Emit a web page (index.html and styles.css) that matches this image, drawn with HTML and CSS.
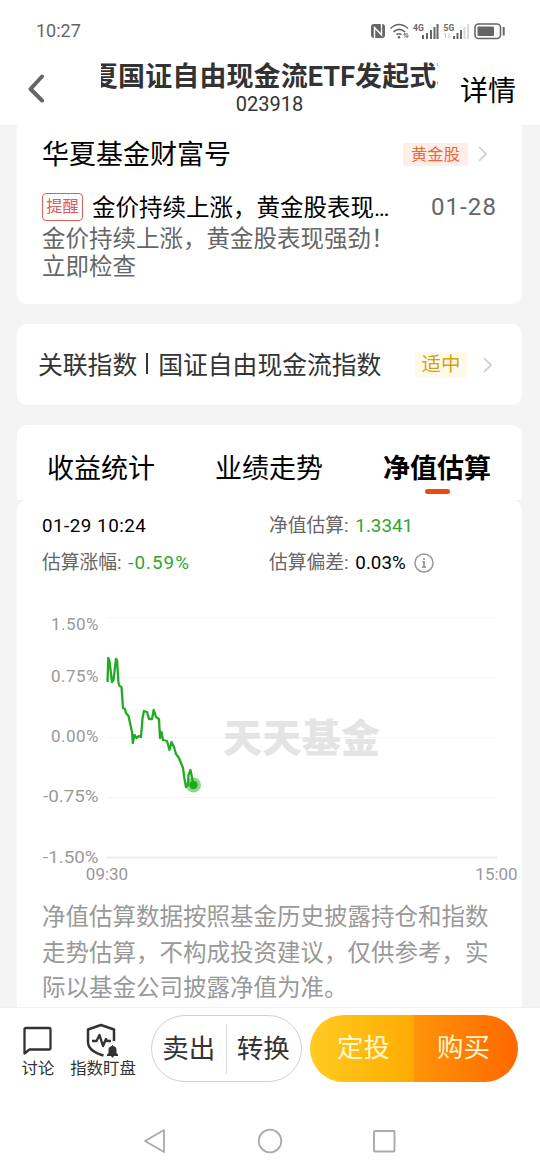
FILE: index.html
```html
<!DOCTYPE html>
<html lang="zh-CN">
<head>
    <meta charset="UTF-8">
    <meta name="viewport" content="width=device-width, initial-scale=1.0">
    <title>基金详情</title>
    <link rel="stylesheet" href="styles.css">
</head>
<body>

    <!-- Status bar -->
    <div class="status">
        <span class="time">10:27</span>
        <svg class="status-icons" width="136" height="20" viewBox="0 0 136 20">
            <rect x="1" y="1" width="14" height="14" rx="3" fill="#666"/>
            <path d="M4.500 15V4.500l7 7.500V1" fill="none" stroke="#fff" stroke-width="1.400"/>
            <path d="M6.800 2l4 4.500" stroke="#666" stroke-width="2"/>
            <g fill="none" stroke="#666" stroke-width="1.600">
                <path d="M20.500 5.500q8.500-8 17.500 0M23.500 8.800q5.500-5 11.500 0M26.500 11.700q2.500-2 5 0"/>
            </g>
            <circle cx="29" cy="14.200" r="1.300" fill="#666"/>
            <path d="M35 14.500V10l-1.500 2M37 10v4.500l1.500-2" fill="none" stroke="#666"/>
            <text x="43" y="7.500" class="net">4G</text>
            <path d="M52 12h2v4h-2zM56 10h2v6h-2zM60 7h2v9h-2zM63.500 4h2v12h-2zM66.500 1h2v15h-2z" fill="#666"/>
            <text x="73.500" y="7.500" class="net">5G</text>
            <path d="M75.500 15v-5l-1.500 2M79 10v5l1.500-2" fill="none" stroke="#ccc"/>
            <path d="M83 13h2v3h-2zM86.500 10h2v6h-2zM90 7h2v9h-2z" fill="#666"/>
            <path d="M93.500 4h2v12h-2zM97 1h2v15h-2z" fill="#d8d8d8"/>
            <rect x="105" y="1" width="25.500" height="14.500" rx="3.500" fill="none" stroke="#666" stroke-width="1.600"/>
            <rect x="107.500" y="3.500" width="16.500" height="9.500" rx="1" fill="#666"/>
            <path d="M133.700 4v8.500" stroke="#666" stroke-width="2"/>
        </svg>
    </div>

    <!-- Header -->
    <div class="header">
        <svg class="back" width="18" height="30" viewBox="0 0 18 30">
            <path d="M15 2.500L3.500 15 15 26.500" fill="none" stroke="#666" stroke-width="4" stroke-linecap="round" stroke-linejoin="round"/>
        </svg>
        <div class="fund">
            <div class="fund-name"><span>夏国证自由现金流ETF发起式联</span></div>
            <div class="fund-code">023918</div>
        </div>
        <div class="detail">详情</div>
    </div>

    <!-- Content -->
    <div class="content">
        <div class="card news">
            <div class="news-head">
                <h2>华夏基金财富号</h2>
                <span class="tag orange">黄金股</span>
                <svg class="arrow" width="10" height="16" viewBox="0 0 10 16"><path d="M1 1l7 7-7 7" fill="none" stroke="#ccc" stroke-width="1.700"/></svg>
            </div>
            <div class="news-row">
                <span class="remind">提醒</span>
                <span class="news-title">金价持续上涨，黄金股表现<i>...</i></span>
                <span class="date">01-28</span>
            </div>
            <p class="news-text">金价持续上涨，黄金股表现强劲！<br>立即检查</p>
        </div>

        <div class="card index">
            <span class="index-name">关联指数<i class="bar"></i>国证自由现金流指数</span>
            <span class="tag yellow">适中</span>
            <svg class="arrow" width="10" height="16" viewBox="0 0 10 16"><path d="M1 1l7 7-7 7" fill="none" stroke="#ccc" stroke-width="1.700"/></svg>
        </div>

        <div class="tabs">
            <span>收益统计</span>
            <span>业绩走势</span>
            <span class="active">净值估算</span>
        </div>

        <div class="panel">
            <div class="stats">
                <div class="black wide">01-29 10:24</div>
                <div>净值估算: <b class="green">1.3341</b></div>
                <div>估算涨幅: <b class="green rate">-0.59%</b></div>
                <div>估算偏差: <b class="black">0.03%</b>
                    <svg class="info" width="20" height="20" viewBox="0 0 20 20">
                        <circle cx="10" cy="10" r="9" fill="none" stroke="#999" stroke-width="1.500"/>
                        <path d="M10 5v2M8.500 9H10v5M8 14.200h4" fill="none" stroke="#999" stroke-width="1.800"/>
                    </svg>
                </div>
            </div>

            <!-- Estimate chart -->
            <svg class="chart" width="505" height="290" viewBox="17 600 505 290">
                <path d="M107 617.500H497M107 677.500H497M107 737.500H497M107 797.500H497" stroke="#f4f4f4"/>
                <path d="M107 857.500H497" stroke="#ececec" stroke-width="2"/>
                <text x="223" y="752" class="watermark" textLength="157">天天基金</text>
                <g class="axis">
                    <text x="51" y="630" textLength="47.500">1.50%</text>
                    <text x="51" y="682" textLength="47.500">0.75%</text>
                    <text x="51" y="742" textLength="47.500">0.00%</text>
                    <text x="43" y="802" textLength="55.500" lengthAdjust="spacingAndGlyphs">-0.75%</text>
                    <text x="43" y="863" textLength="55.500" lengthAdjust="spacingAndGlyphs">-1.50%</text>
                </g>
                <g class="axis" text-anchor="middle">
                    <text x="107" y="880">09:30</text>
                    <text x="496.500" y="880">15:00</text>
                </g>
                <path d="M107.500 682L108.300 658 109.500 661 112 682 113.500 680 116 659 117 660 118.500 683 119.500 686 121.500 687 123 708 125 709 126 713 128.500 716 130.500 725 132 732 132.800 743 134.500 735 136.500 738 139 736 141 737 142.500 718 144 711 147 712 149 719 152 719 153.700 710 156 717 159 719 160 738 161.500 732 163 740 167 741 169.500 750 171.500 742 174 747 176 754 179 758 183 768 184.500 779 186 787 188 785 188.500 775 190.500 770 193.500 785" fill="none" stroke="#22ab22" stroke-width="2.300" stroke-linejoin="round"/>
                <circle cx="193.500" cy="785" r="7.500" fill="#22ab22" opacity=".5"/>
                <circle cx="193.500" cy="785" r="4.200" fill="#1aad19"/>
            </svg>

            <p class="note">净值估算数据按照基金历史披露持仓和指数<br>走势估算，不构成投资建议，仅供参考，实<br>际以基金公司披露净值为准。</p>
        </div>
    </div>

    <!-- Bottom bar -->
    <div class="footer">
        <div class="tool talk">
            <svg width="32" height="32" viewBox="0 0 32 32">
                <path d="M2.500 28.500V4.500Q2.500 3 4 3H27Q28.500 3 28.500 4.500V23Q28.500 24.500 27 24.500H7.500z" fill="none" stroke="#333" stroke-width="2.300" stroke-linejoin="round"/>
            </svg>
            <span>讨论</span>
        </div>
        <div class="tool watch">
            <svg width="34" height="36" viewBox="0 0 34 36">
                <path d="M28 18V6.500L15 2 2 6.500V19Q2 28 17.500 32.500" fill="none" stroke="#333" stroke-width="2.500" stroke-linejoin="round"/>
                <path d="M6 18h4.500l3-6 3.500 11 3-7 1 2h4" fill="none" stroke="#333" stroke-width="2.400" stroke-linejoin="round"/>
                <path d="M21 33v-1.500l1.500-1.500v-3q0-3.500 3.500-4v-1h1v1q3.500.5 3.500 4v3l1.500 1.500V33h-4l-1 1.500h-1l-1-1.500z" fill="#333"/>
            </svg>
            <span>指数盯盘</span>
        </div>
        <div class="trade">
            <span>卖出</span>
            <span>转换</span>
        </div>
        <div class="buy">
            <span>定投</span>
            <span>购买</span>
        </div>
    </div>

    <!-- System navigation -->
    <div class="nav">
        <svg width="24" height="26" viewBox="0 0 24 26"><path d="M21 2v22L2 13z" fill="none" stroke="#aaa" stroke-width="1.800" stroke-linejoin="round"/></svg>
        <svg width="26" height="26" viewBox="0 0 26 26"><circle cx="13" cy="13" r="11.300" fill="none" stroke="#aaa" stroke-width="1.800"/></svg>
        <svg width="24" height="26" viewBox="0 0 24 26"><rect x="1" y="3" width="20.500" height="20.500" rx="1" fill="none" stroke="#aaa" stroke-width="1.900"/></svg>
    </div>

</body>
</html>
```
FILE: styles.css
```css
* {
    box-sizing: border-box;
}
body {
    margin: 0;
    width: 540px;
    height: 1170px;
    overflow: hidden;
    display: flex;
    flex-direction: column;
    background-color: #fff;
    font-family: Roboto, "Noto Sans CJK SC", sans-serif;
    color: #333;
}
h2, p {
    margin: 0;
    font-weight: normal;
}
svg {
    display: block;
    flex: none;
}
.status {
    height: 60px;
    padding: 21px 34px 0 36px;
    display: flex;
    justify-content: space-between;
}
.time {
    font-size: 18px;
    line-height: 20px;
    color: #666;
}
.status-icons {
    margin-top: 2px;
}
.net {
    font-size: 8.5px;
    font-weight: bold;
    fill: #666;
}
.header {
    height: 65px;
    display: flex;
}
.back {
    margin: 14px 0 0 27px;
}
.fund {
    width: 337px;
    margin-left: 56px;
    text-align: center;
}
.fund-name {
    height: 33px;
    line-height: 35px;
    overflow: hidden;
    font-size: 27px;
    font-weight: bold;
    letter-spacing: 0.1px;
    white-space: nowrap;
    text-align: left;
}
.fund-name span {
    margin-left: -10px;
}
.fund-code {
    font-size: 20px;
    line-height: 22px;
}
.detail {
    margin-left: 22px;
    padding-top: 12px;
    font-size: 28px;
    line-height: 40px;
    color: #000;
}
.content {
    height: 882px;
    padding: 0 18px 0 17px;
    overflow: hidden;
    background-color: #f4f4f4;
}
.card {
    background-color: #fff;
    border-radius: 10px;
    margin-bottom: 20px;
}
.news {
    height: 179px;
    padding: 10px 25px 0;
    border-radius: 0 0 10px 10px;
}
.news-head {
    display: flex;
    align-items: center;
    height: 38px;
}
.news-head h2 {
    flex: 1;
    padding-top: 2px;
    font-size: 27px;
    line-height: 38px;
    color: #000;
}
.news-head .arrow {
    margin: 0 9px 0 10px;
}
.tag {
    border-radius: 3px;
    text-align: center;
}
.orange {
    width: 65px;
    font-size: 16.3px;
    line-height: 23px;
    color: #e8683c;
    background-color: #ffeee8;
}
.news-row {
    display: flex;
    align-items: center;
    height: 32px;
    margin-top: 18px;
}
.remind {
    width: 41px;
    height: 28px;
    border: 1px solid #d9605f;
    border-radius: 4px;
    font-size: 16.3px;
    line-height: 25px;
    text-align: center;
    color: #e05a5a;
}
.news-title {
    flex: 1;
    margin-left: 9px;
    padding-bottom: 3px;
    font-size: 23.5px;
    color: #000;
    white-space: nowrap;
}
.news-title i {
    font-style: normal;
    letter-spacing: -1.5px;
}
.date {
    font-size: 24px;
    letter-spacing: 1.1px;
    color: #666;
}
.news-text {
    padding-top: 2px;
    font-size: 23.5px;
    line-height: 28px;
    color: #666;
    white-space: nowrap;
}
.index {
    height: 81px;
    padding: 0 29px 0 21px;
    display: flex;
    align-items: center;
}
.index-name {
    flex: 1;
    padding-bottom: 3px;
    font-size: 24.8px;
    white-space: nowrap;
}
.bar {
    display: inline-block;
    width: 2px;
    height: 21px;
    margin: 0 10px 0 9px;
    background-color: #333;
}
.yellow {
    width: 52px;
    font-size: 19.5px;
    line-height: 26px;
    color: #d6a214;
    background-color: #fff9ea;
}
.index .arrow {
    margin-left: 16px;
}
.tabs {
    height: 75px;
    padding: 24px 31px 0 30px;
    display: flex;
    justify-content: space-between;
    background-color: #fff;
    border-radius: 10px 10px 0 0;
    font-size: 27px;
    line-height: 40px;
    color: #000;
}
.active {
    font-weight: bold;
}
.active::after {
    content: "";
    display: block;
    width: 25px;
    height: 5px;
    margin: 0 auto;
    border-radius: 3px;
    background-color: #ec4a10;
}
.panel {
    background-color: #fff;
    border-radius: 10px 10px 0 0;
}
.stats {
    height: 100px;
    padding: 8px 0 0 25px;
    display: grid;
    grid-template-columns: 227px 1fr;
    grid-auto-rows: 37px;
    font-size: 18.8px;
    line-height: 37px;
    color: #666;
    white-space: nowrap;
}
.stats b {
    margin-left: 2px;
    font-weight: normal;
}
.stats .black {
    color: #000;
}
.stats .green {
    color: #2fa52f;
}
.stats .wide {
    letter-spacing: 0.5px;
}
.stats .rate {
    letter-spacing: 1px;
}
.info {
    display: inline-block;
    margin-left: 4px;
    vertical-align: -4px;
}
.axis {
    font-size: 17px;
    fill: #999;
}
.watermark {
    font-size: 39px;
    font-weight: 900;
    fill: #e4e4e4;
}
.note {
    padding: 10px 25px 0;
    font-size: 23.5px;
    line-height: 35.7px;
    color: #999;
    white-space: nowrap;
}
.footer {
    height: 103px;
    border-top: 1px solid #f0f0f0;
    display: flex;
    background-color: #fff;
}
.tool {
    display: flex;
    flex-direction: column;
    align-items: center;
    font-size: 16.4px;
    line-height: 20px;
    white-space: nowrap;
}
.talk {
    width: 34px;
    margin-left: 21px;
    padding-top: 17px;
}
.watch {
    width: 66px;
    margin-left: 15px;
    padding-top: 15px;
}
.talk span {
    margin-top: 2px;
}
.trade, .buy {
    height: 67px;
    margin-top: 7px;
    border-radius: 34px;
    display: flex;
    overflow: hidden;
    font-size: 26.5px;
}
.trade span, .buy span {
    flex: 1;
    text-align: center;
    line-height: 66px;
}
.trade {
    width: 151px;
    margin-left: 15px;
    border: 1px solid #d0d0d0;
}
.trade span {
    padding-right: 1px;
}
.trade span:first-child {
    background: linear-gradient(#d8d8d8, #d8d8d8) right center / 1px 50px no-repeat;
}
.buy {
    width: 208px;
    margin-left: 8px;
    color: #fff8d0;
}
.buy span {
    flex: none;
    width: 104px;
}
.buy span:first-child {
    padding-left: 3px;
    background: linear-gradient(to right, #ffcb22, #ffab00);
}
.buy span:last-child {
    padding-right: 5px;
    background: linear-gradient(to right, #ff9408, #ff6800);
}
.nav {
    height: 60px;
    padding: 18px 143px 0;
    display: flex;
    justify-content: space-between;
}
```
